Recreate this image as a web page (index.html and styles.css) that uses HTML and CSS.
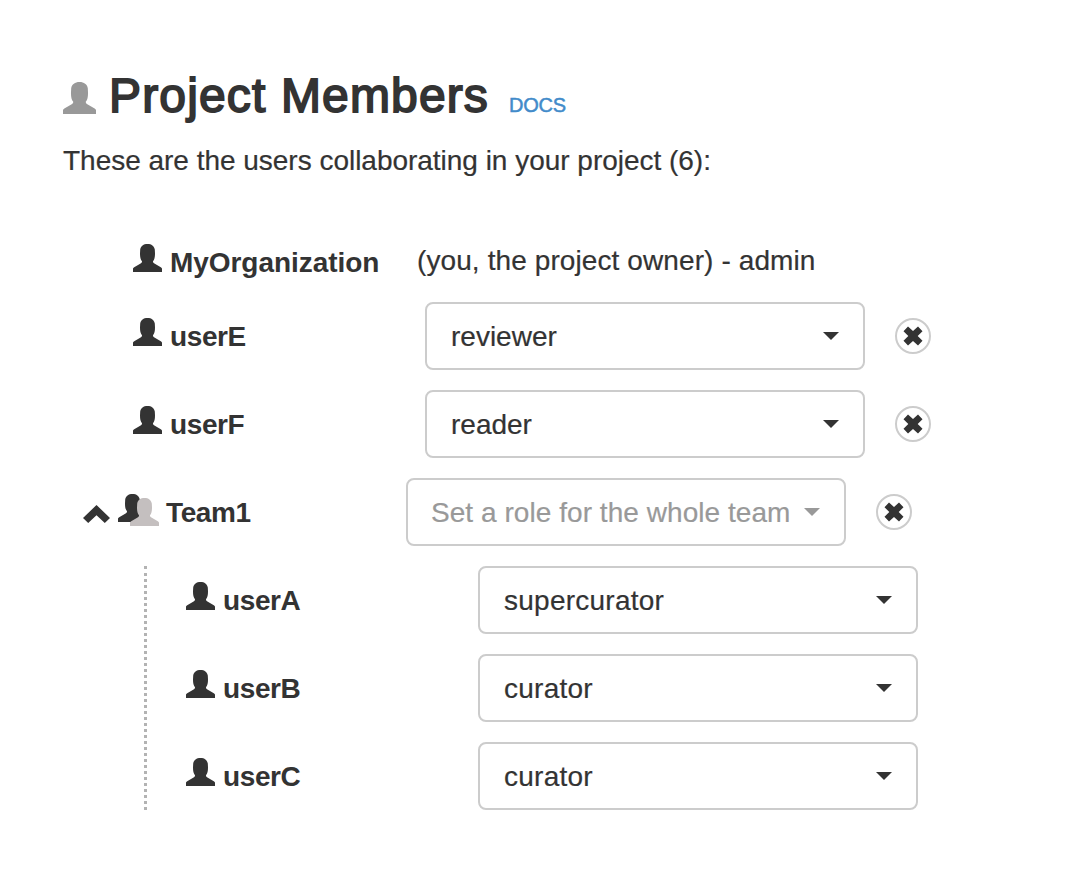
FILE: index.html
```html
<!DOCTYPE html>
<html lang="en">
<head>
<meta charset="utf-8">
<title>Project Members</title>
<link rel="stylesheet" href="styles.css">
</head>
<body>
<svg class="defs" aria-hidden="true">
  <symbol id="user" viewBox="0 0 29 28"><path d="M14.500 0C18.500 0 21.200 2 21.800 5.500L22 9.500C22 13 21.500 15.500 20 17.300C20 18.300 20.300 18.700 21 19.200L27.800 23.200C28.700 23.800 29 24.200 29 25V28H0V25C0 24.200 .3 23.800 1.200 23.200L8 19.200C8.700 18.700 9 18.300 9 17.300C7.500 15.500 7 13 7 9.500L7.200 5.500C7.800 2 10.500 0 14.500 0Z"/></symbol>
  <symbol id="cross" viewBox="0 0 20 20"><path d="M5 .5 10 5 15 .5 19.500 5.200 14.700 10 19.500 14.800 15 19.500 10 15 5 19.500 .5 14.800 5.300 10 .5 5.200Z"/></symbol>
</svg>
<main class="page">
  <h1 class="title"><svg class="title-icon"><use href="#user"/></svg><span class="title-text">Project Members</span><a class="docs">DOCS</a></h1>
  <p class="intro">These are the users collaborating in your project (6):</p>
  <div class="members">
    <div class="row owner"><svg class="user"><use href="#user"/></svg><b class="name org">MyOrganization</b><span class="note">(you, the project owner) - admin</span></div>
    <div class="row"><svg class="user"><use href="#user"/></svg><b class="name">userE</b><div class="select"><span class="role">reviewer</span><i class="caret"></i></div><button class="remove"><svg><use href="#cross"/></svg></button></div>
    <div class="row"><svg class="user"><use href="#user"/></svg><b class="name">userF</b><div class="select"><span class="role">reader</span><i class="caret"></i></div><button class="remove"><svg><use href="#cross"/></svg></button></div>
    <div class="row team">
      <svg class="chevron" viewBox="0 0 27 18"><path d="M0 13 13.500 0 27 13 21.800 18 13.500 10.200 5.200 18Z"/></svg>
      <svg class="group" viewBox="0 0 41 32"><use href="#user" width="29" height="28"/><use class="back" href="#user" x="12" y="4" width="29" height="28"/></svg>
      <b class="name">Team1</b><div class="select unset"><span class="role">Set a role for the whole team</span><i class="caret"></i></div><button class="remove"><svg><use href="#cross"/></svg></button>
    </div>
    <div class="team-members">
      <div class="row"><svg class="user"><use href="#user"/></svg><b class="name">userA</b><div class="select"><span class="role wide">supercurator</span><i class="caret"></i></div></div>
      <div class="row"><svg class="user"><use href="#user"/></svg><b class="name">userB</b><div class="select"><span class="role wide">curator</span><i class="caret"></i></div></div>
      <div class="row"><svg class="user"><use href="#user"/></svg><b class="name">userC</b><div class="select"><span class="role wide">curator</span><i class="caret"></i></div></div>
    </div>
  </div>
</main>
</body>
</html>
```
FILE: styles.css
```css
* { box-sizing: border-box; }
body { margin: 0; background: #fff; color: #333; font: 28px/40px "Liberation Sans", Arial, sans-serif; }
svg { display: block; flex: none; fill: currentColor; }
.defs { display: none; }
.page { padding: 66px 0 0 63px; }
.title { display: flex; align-items: baseline; height: 60px; margin: 0; font-size: 48px; line-height: 60px; font-weight: 400; white-space: nowrap; }
.title-icon { width: 33px; height: 32px; margin-right: 13px; color: #999; transform: translateY(2px); }
.title-text { width: 400px; letter-spacing: 1.15px; -webkit-text-stroke: 1.8px #333; }
.docs { color: #428bca; font-size: 20px; letter-spacing: -.2px; -webkit-text-stroke: .5px #428bca; }
.intro { margin: 15px 0 0; height: 40px; white-space: nowrap; letter-spacing: -.02px; -webkit-text-stroke: .2px #333; }
.members { padding-top: 46px; display: flex; flex-direction: column; gap: 20px; }
.row { display: flex; align-items: center; height: 68px; padding-left: 70px; white-space: nowrap; }
.owner { margin-bottom: -13px; }
.user { width: 29px; height: 28px; margin: -9px 8px 0 0; }
.owner .user { margin-top: -7px; }
.name { width: 255px; letter-spacing: -.4px; padding-top: 1px; }
.org { width: 247px; letter-spacing: -.05px; padding-top: 4px; }
.note { letter-spacing: .1px; -webkit-text-stroke: .2px #333; }
.select { display: flex; align-items: center; justify-content: space-between; width: 440px; height: 68px; padding: 0 24px; border: 2px solid #ccc; border-radius: 8px; }
.role { padding-top: 2px; -webkit-text-stroke: .2px currentColor; }
.wide { letter-spacing: .25px; }
.unset { color: #999; padding-left: 23px; }
.unset .role { letter-spacing: .05px; }
.caret { border: 8px solid transparent; border-top-color: currentColor; border-bottom: 0; }
.remove { display: flex; align-items: center; justify-content: center; width: 36px; height: 36px; margin-left: 30px; padding: 0; background: #fff; color: #333; border: 2px solid #ccc; border-radius: 50%; }
.remove svg { width: 20px; height: 20px; }
.team { padding-left: 20px; }
.team .name { width: 240px; }
.chevron { width: 27px; height: 18px; margin: 4px 8px 0 0; }
.group { width: 41px; height: 32px; margin: -4px 7px 0 0; }
.back { color: #c4bfbf; }
.team-members { display: flex; flex-direction: column; gap: 20px; margin-left: 81px; border-left: 3px dotted #b3b3b3; }
.team-members .row { padding-left: 39px; }
```
